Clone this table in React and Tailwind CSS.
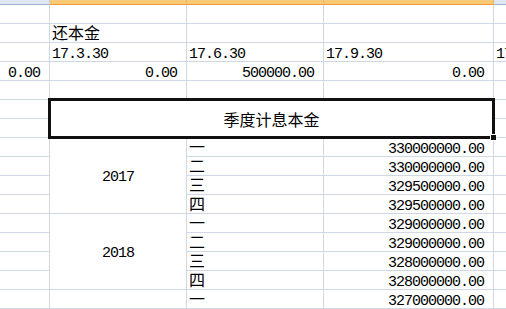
// Excel-style sheet fragment: quarterly principal schedule
const grid = "border-r border-b border-[#d0d7e5]";
const num =
  "h-[18px] whitespace-nowrap font-['Liberation_Mono',monospace] text-[15px] leading-[23px] tracking-[-1px] text-black";
const cjk =
  "whitespace-nowrap pt-[1px] font-['Noto_Sans_CJK_SC',sans-serif] text-[16px] leading-[14px] text-black";

const Cell = ({ children, className = "" }) => (
  <div className={`${grid} ${className}`}>{children}</div>
);

const Num = ({ children, right }) => (
  <div className={`${num} ${right ? "text-right pr-[9px]" : "pl-[2px]"}`}>{children}</div>
);

const Han = ({ children }) => <div className={`${cjk} pl-[2px]`}>{children}</div>;

const quarters = ["一", "二", "三", "四"];

const Year = ({ year, values }) => (
  <>
    <Cell />
    <Cell className="row-span-4 flex items-center justify-center">
      <span className="pt-[3px] font-['Liberation_Mono',monospace] text-[15px] leading-none tracking-[-1px]">
        {year}
      </span>
    </Cell>
    <Cell>
      <Han>{quarters[0]}</Han>
    </Cell>
    <Cell>
      <Num right>{values[0]}</Num>
    </Cell>
    <Cell />
    {quarters.slice(1).map((q, i) => (
      <div key={q} className="contents">
        <Cell />
        <Cell>
          <Han>{q}</Han>
        </Cell>
        <Cell>
          <Num right>{values[i + 1]}</Num>
        </Cell>
        <Cell />
      </div>
    ))}
  </>
);

export default function App() {
  return (
    <div className="relative h-[309px] w-[506px] overflow-hidden bg-white">
      <div className="grid grid-cols-[50px_137px_137px_170px_1fr] grid-rows-[5px_repeat(16,19px)]">
        {/* column headers (only the bottom edge is visible) */}
        <div className="border-r border-b border-r-[#c3cfdd] border-b-[#9eb6ce] bg-[#dde6f1]" />
        <div className="border-r border-b border-r-[#e9b86c] border-b-[#f29b33] bg-[#f8c977]" />
        <div className="border-r border-b border-r-[#e9b86c] border-b-[#f29b33] bg-[#f8c977]" />
        <div className="border-r border-b border-r-[#e9b86c] border-b-[#f29b33] bg-[#f8c977]" />
        <div className="border-b border-b-[#9eb6ce] bg-[#dde6f1]" />

        {/* row 1 */}
        <Cell />
        <Cell />
        <Cell />
        <Cell />
        <Cell />

        {/* row 2 */}
        <Cell />
        <Cell>
          <Han>还本金</Han>
        </Cell>
        <Cell />
        <Cell />
        <Cell />

        {/* row 3 */}
        <Cell />
        <Cell>
          <Num>17.3.30</Num>
        </Cell>
        <Cell>
          <Num>17.6.30</Num>
        </Cell>
        <Cell>
          <Num>17.9.30</Num>
        </Cell>
        <Cell>
          <Num>17.12.30</Num>
        </Cell>

        {/* row 4 */}
        <Cell>
          <Num right>0.00</Num>
        </Cell>
        <Cell>
          <Num right>0.00</Num>
        </Cell>
        <Cell>
          <Num right>500000.00</Num>
        </Cell>
        <Cell>
          <Num right>0.00</Num>
        </Cell>
        <Cell />

        {/* row 5 */}
        <Cell />
        <Cell />
        <Cell />
        <Cell />
        <Cell />

        {/* rows 6-7: merged title */}
        <Cell />
        <Cell className="col-span-3 row-span-2 flex items-center justify-center">
          <span className="font-['Noto_Sans_CJK_SC',sans-serif] text-[16px] leading-[16px]">季度计息本金</span>
        </Cell>
        <Cell />
        <Cell />
        <Cell />

        <Year year="2017" values={["330000000.00", "330000000.00", "329500000.00", "329500000.00"]} />
        <Year year="2018" values={["329000000.00", "329000000.00", "328000000.00", "328000000.00"]} />

        {/* row 16 */}
        <Cell />
        <Cell />
        <Cell>
          <Han>一</Han>
        </Cell>
        <Cell>
          <Num right>327000000.00</Num>
        </Cell>
        <Cell />
      </div>

      {/* active cell selection */}
      <div className="pointer-events-none absolute left-[48px] top-[98px] h-[41px] w-[447px] border-[3px] border-[#111]" />
      <div className="pointer-events-none absolute left-[490px] top-[134px] h-[7px] w-[7px] border border-white bg-[#111]" />
    </div>
  );
}
